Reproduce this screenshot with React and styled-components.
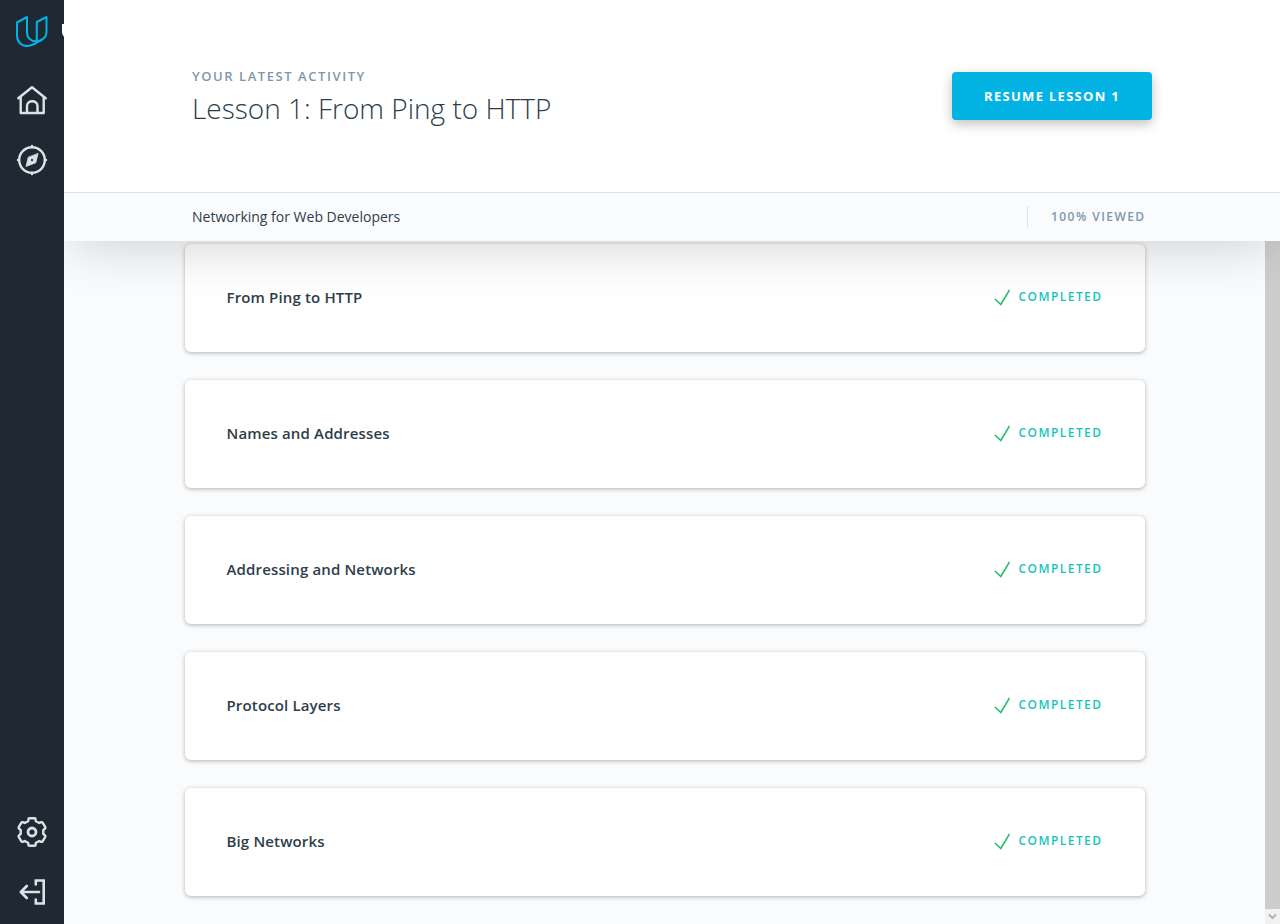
import React from "react";
import styled, { createGlobalStyle } from "styled-components";

const GlobalStyle = createGlobalStyle`
  *, *::before, *::after { box-sizing: border-box; }
  body {
    margin: 0;
    font-family: "Open Sans", sans-serif;
    color: #2e3d49;
    background: #fafbfd;
  }
  h1, h2, p, ul { margin: 0; padding: 0; }
`;

const Shell = styled.div`
  display: flex;
  height: 100vh;
  overflow: hidden;
`;

const Sidebar = styled.nav`
  position: relative;
  z-index: 2;
  flex: none;
  display: flex;
  flex-direction: column;
  width: 64px;
  background: #1f2933;
  overflow: hidden;
`;

const NavGroup = styled.div`
  display: flex;
  flex-direction: column;
  margin-top: ${(p) => (p.$end ? "auto" : "6px")};
  padding-bottom: ${(p) => (p.$end ? "2px" : "0")};
`;

const SideLink = styled.a`
  display: flex;
  align-items: center;
  justify-content: ${(p) => (p.$logo ? "flex-start" : "center")};
  height: ${(p) => (p.$logo ? "64px" : "60px")};
  color: #dbe2e8;
  svg { display: block; flex: none; }
`;

const Main = styled.main`
  flex: 1;
  min-width: 0;
  display: flex;
  flex-direction: column;
`;

const Top = styled.header`
  position: relative;
  z-index: 1;
  flex: none;
  background: #fff;
  box-shadow: 0 16px 48px -8px rgba(0, 0, 0, 0.16);
`;

const Row = styled.div`
  display: flex;
  align-items: center;
  justify-content: space-between;
  max-width: 960px;
  margin: 0 auto;
`;

const Hero = styled(Row)`
  height: 192px;
`;

const Overline = styled.p`
  font-size: 13px;
  line-height: 24px;
  font-weight: 600;
  letter-spacing: 0.12em;
  text-transform: uppercase;
  color: #7d97ad;
`;

const Title = styled.h1`
  font-size: 28px;
  line-height: 40px;
  font-weight: 300;
`;

const ResumeButton = styled.button`
  height: 48px;
  padding: 0 32px;
  border: 0;
  border-radius: 4px;
  background: #02b3e4;
  color: #fff;
  font: 700 13px/24px "Open Sans", sans-serif;
  letter-spacing: 0.1em;
  text-transform: uppercase;
  box-shadow: 0 4px 12px rgba(0, 0, 0, 0.25);
  cursor: pointer;
`;

const SubBar = styled.div`
  border-top: 1px solid #dbe2e8;
  background: #fafbfd;
`;

const SubRow = styled(Row)`
  height: 48px;
`;

const Course = styled.p`
  font-size: 14px;
  line-height: 24px;
`;

const Viewed = styled(Overline)`
  width: 125px;
  padding-left: 23px;
  border-left: 1px solid #dbe2e8;
  font-size: 12px;
  line-height: 22px;
`;

const Body = styled.div`
  flex: 1;
  min-height: 0;
  display: flex;
`;

const Scroller = styled.div`
  flex: 1;
  min-width: 0;
  overflow: hidden;
  padding: 3px 24px 28px;
`;

const Lessons = styled.ul`
  display: flex;
  flex-direction: column;
  gap: 28px;
  max-width: 960px;
  margin: 0 auto;
  list-style: none;
`;

const Card = styled.li`
  display: flex;
  align-items: center;
  justify-content: space-between;
  height: 108px;
  padding: 0 42px 2px;
  border-radius: 6px;
  background: #fff;
  box-shadow: 0 1px 4px rgba(0, 0, 0, 0.3);
`;

const LessonName = styled.h2`
  font-size: 15px;
  line-height: 24px;
  font-weight: 600;
  letter-spacing: 0.01em;
`;

const Status = styled.span`
  display: flex;
  align-items: center;
  gap: 8px;
  font-size: 12px;
  line-height: 24px;
  font-weight: 600;
  letter-spacing: 0.12em;
  text-transform: uppercase;
  color: #15c5bd;
`;

const ScrollTrack = styled.div`
  flex: none;
  display: flex;
  flex-direction: column;
  width: 15px;
  background: #f1f1f1;
`;

const ScrollThumb = styled.div`
  flex: 1;
  background: #cdcdcd;
`;

const ScrollArrow = styled.div`
  display: grid;
  place-items: center;
  height: 15px;
`;

const Logo = () => (
  <svg width="64" height="64" fill="none" stroke="#02b3e4" strokeWidth="2" strokeLinejoin="round">
    <path d="M27 17L17 22.500V35.500C17 42 21.500 46 27.500 46C30.500 46 33 45 35 43.700L42.500 39.200C45 37.600 46.500 35 46.500 32V17L36.800 22V41.500C31 41.500 27 38 27 32.500Z" />
    <path d="M36.800 41.500C39 41.500 41 40.500 42.500 39.200" />
    <path d="M62 24H66V38C63.500 36.500 62 34.500 62 31.500Z" fill="#fff" stroke="none" />
  </svg>
);

const iconProps = {
  width: 32,
  height: 32,
  viewBox: "0 0 32 32",
  fill: "none",
  stroke: "currentColor",
  strokeWidth: 2.4,
  strokeLinecap: "round",
  strokeLinejoin: "round",
};

const HomeIcon = () => (
  <svg {...iconProps}>
    <path d="M2.300 14.300L16 3.200L29.700 14.300M4.700 13V29H27.700V13M11 29V22C11 15.700 21.500 15.700 21.500 22V29" />
  </svg>
);

const CompassIcon = () => (
  <svg {...iconProps}>
    <circle cx="16" cy="16" r="12.800" />
    <path d="M16 2V3M16 29V30M2 16H3M29 16H30" />
    <path
      fill="currentColor"
      stroke="currentColor"
      strokeWidth="0.800"
      fillRule="evenodd"
      d="M22 9.700L19.800 18.700L10 22.500L12.200 13.500ZM16 14.200L17.800 16L16 17.800L14.500 16.200Z"
    />
  </svg>
);

const GearIcon = () => (
  <svg {...iconProps}>
    <path d="M13.300 2.300H18.700Q19.500 2.300 19.600 3.200L19.900 5.300L23.300 7L25.200 6.200Q26.100 5.900 26.600 6.700L29.300 11.200Q29.700 12 29 12.600L27.300 14V18L29 19.400Q29.700 20 29.300 20.800L26.600 25.300Q26.100 26.100 25.200 25.800L23.300 25L19.900 26.700L19.600 28.800Q19.500 29.700 18.700 29.700H13.300Q12.500 29.700 12.400 28.800L12.100 26.700L8.700 25L6.800 25.800Q5.900 26.100 5.400 25.300L2.700 20.800Q2.300 20 3 19.400L4.700 18V14L3 12.600Q2.300 12 2.700 11.200L5.400 6.700Q5.900 5.900 6.800 6.200L8.700 7L12.100 5.300L12.400 3.200Q12.500 2.300 13.300 2.300Z" />
    <circle cx="16" cy="16" r="4" strokeWidth="2.800" />
  </svg>
);

const ExitIcon = () => (
  <svg {...iconProps} strokeWidth="2.600" strokeLinejoin="miter">
    <path d="M19.800 8.500V4.500H27.700V27.500H19.800V23.500" />
    <path d="M23 16H4.800M10.800 10L4.800 16L10.800 22" strokeLinejoin="round" />
  </svg>
);

const CheckIcon = () => (
  <svg width="17" height="18" fill="none" stroke="#1fbf6b" strokeWidth="1.500">
    <path d="M1 11L6.800 16.500L15.500 2" />
  </svg>
);

const lessons = [
  "From Ping to HTTP",
  "Names and Addresses",
  "Addressing and Networks",
  "Protocol Layers",
  "Big Networks",
];

export default function App() {
  return (
    <>
      <GlobalStyle />
      <Shell>
        <Sidebar aria-label="Main">
          <SideLink href="#" $logo aria-label="Udacity"><Logo /></SideLink>
          <NavGroup>
            <SideLink href="#home" aria-label="Home"><HomeIcon /></SideLink>
            <SideLink href="#catalog" aria-label="Catalog"><CompassIcon /></SideLink>
          </NavGroup>
          <NavGroup $end>
            <SideLink href="#settings" aria-label="Settings"><GearIcon /></SideLink>
            <SideLink href="#logout" aria-label="Log out"><ExitIcon /></SideLink>
          </NavGroup>
        </Sidebar>
        <Main>
          <Top>
            <Hero>
              <div>
                <Overline>Your latest activity</Overline>
                <Title>Lesson 1: From Ping to HTTP</Title>
              </div>
              <ResumeButton type="button">Resume Lesson 1</ResumeButton>
            </Hero>
            <SubBar>
              <SubRow>
                <Course>Networking for Web Developers</Course>
                <Viewed>100% viewed</Viewed>
              </SubRow>
            </SubBar>
          </Top>
          <Body>
            <Scroller>
              <Lessons>
                {lessons.map((name) => (
                  <Card key={name}>
                    <LessonName>{name}</LessonName>
                    <Status><CheckIcon />Completed</Status>
                  </Card>
                ))}
              </Lessons>
            </Scroller>
            <ScrollTrack aria-hidden="true">
              <ScrollThumb />
              <ScrollArrow>
                <svg width="9" height="7" fill="none" stroke="#b5b5b5" strokeWidth="2">
                  <path d="M1 1.500L4.500 5L8 1.500" />
                </svg>
              </ScrollArrow>
            </ScrollTrack>
          </Body>
        </Main>
      </Shell>
    </>
  );
}
